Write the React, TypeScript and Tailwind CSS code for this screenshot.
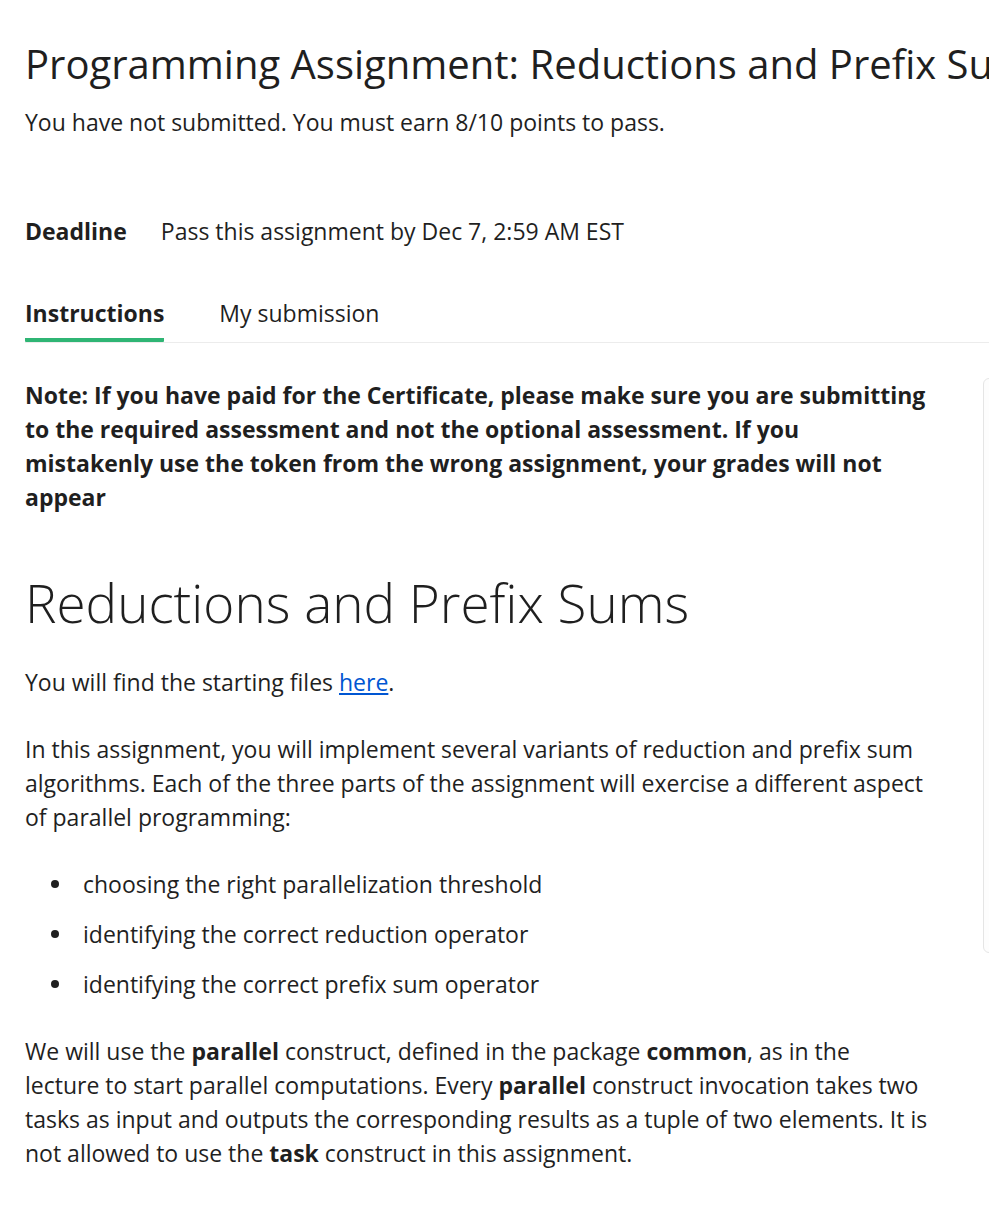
export default function App() {
  return (
    <div
      className="min-h-[1209px] w-[989px] overflow-hidden bg-white text-[#1f1f1f]"
      style={{ fontFamily: '"Open Sans", "Liberation Sans", sans-serif' }}
    >
      <div className="pl-[25px] pt-[38px]">
        {/* Header */}
        <h1 className="whitespace-nowrap text-[40px] leading-[52px] font-normal">
          Programming Assignment: Reductions and Prefix Sums
        </h1>
        <p className="mt-[17px] text-[23px] leading-[30px]">
          You have not submitted. You must earn 8/10 points to pass.
        </p>

        {/* Deadline */}
        <div className="mt-[79px] flex items-center gap-[34px] text-[23px] leading-[30px]">
          <span className="font-bold">Deadline</span>
          <span>Pass this assignment by Dec 7, 2:59 AM EST</span>
        </div>

        {/* Tabs */}
        <div className="mt-[52px] flex border-b border-[#ececec] text-[23px] leading-[30px]">
          <div className="mr-[55px] border-b-[4px] border-[#2fb574] pb-[10px] font-bold rounded-b-[1px]">
            Instructions
          </div>
          <div className="pb-[10px]">My submission</div>
        </div>

        <div className="flex">
          {/* Main content */}
          <div className="w-[904px] shrink-0 pt-[35px]">
            <p className="text-[23px] font-bold leading-[34px]">
              Note: If you have paid for the Certificate, please make sure you are submitting to the required
              assessment and not the optional assessment. If you mistakenly use the token from the wrong
              assignment, your grades will not appear
            </p>

            <h2 className="mt-[57px] text-[53px] font-light leading-[64px]">Reductions and Prefix Sums</h2>

            <p className="mt-[30px] text-[23px] leading-[34px]">
              You will find the starting files{' '}
              <a href="#" className="text-[#0056d2] underline">
                here
              </a>
              .
            </p>

            <p className="mt-[33px] text-[23px] leading-[34px]">
              In this assignment, you will implement several variants of reduction and prefix sum algorithms.
              Each of the three parts of the assignment will exercise a different aspect of parallel
              programming:
            </p>

            <ul className="mt-[33px] text-[23px] leading-[34px]">
              {[
                'choosing the right parallelization threshold',
                'identifying the correct reduction operator',
                'identifying the correct prefix sum operator',
              ].map((item, i) => (
                <li key={item} className={`flex items-center ${i > 0 ? 'mt-[16px]' : ''}`}>
                  <span className="ml-[26px] mr-[24px] h-[8px] w-[8px] rounded-full bg-[#1f1f1f]" />
                  {item}
                </li>
              ))}
            </ul>

            <p className="mt-[33px] text-[23px] leading-[34px]">
              We will use the <b>parallel</b> construct, defined in the package <b>common</b>, as in the
              lecture to start parallel computations. Every <b>parallel</b> construct invocation takes two
              tasks as input and outputs the corresponding results as a tuple of two elements. It is not
              allowed to use the <b>task</b> construct in this assignment.
            </p>
          </div>

          {/* Side card */}
          <div className="ml-[54px] mt-[35px] h-[575px] w-[200px] shrink-0 rounded-[6px] border border-[#e5e5e5] bg-[#fdfdfd]" />
        </div>
      </div>
    </div>
  );
}
